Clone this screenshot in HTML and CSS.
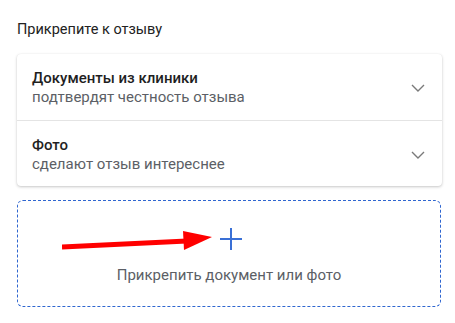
FILE: index.html
```html
<!DOCTYPE html>
<html lang="ru">
<head>
<meta charset="utf-8">
<link rel="stylesheet" href="styles.css">
</head>
<body>
<div class="wrap">
  <div class="heading">Прикрепите к отзыву</div>
  <div class="card">
    <div class="row">
      <div class="texts">
        <div class="row-title">Документы из клиники</div>
        <div class="row-sub">подтвердят честность отзыва</div>
      </div>
      <svg class="chev" width="14" height="8" viewBox="0 0 14 8"><path d="M1 1l6 6 6-6" fill="none" stroke="#7a7a7a" stroke-width="1.4"/></svg>
    </div>
    <div class="row">
      <div class="texts">
        <div class="row-title">Фото</div>
        <div class="row-sub">сделают отзыв интереснее</div>
      </div>
      <svg class="chev" width="14" height="8" viewBox="0 0 14 8"><path d="M1 1l6 6 6-6" fill="none" stroke="#7a7a7a" stroke-width="1.4"/></svg>
    </div>
  </div>
  <div class="drop">
    <svg class="plus" width="22" height="24" viewBox="0 0 22 24"><path d="M11 1v22M0 12h22" stroke="#3a70d6" stroke-width="2"/></svg>
    <div class="drop-text">Прикрепить документ или фото</div>
    <svg class="arrow" width="160" height="26" viewBox="0 0 160 26"><path d="M0 21L125 15" stroke="#ff0000" stroke-width="5"/><path d="M121 5L150 11L122 24Z" fill="#ff0000"/></svg>
  </div>
</div>
</body>
</html>
```
FILE: styles.css
```css
html, body { margin: 0; padding: 0; background: #fff; }
body { font-family: Roboto, "Noto Sans", sans-serif; color: #222; }
.wrap { width: 425px; margin-left: 17px; padding-top: 20px; }
.heading { font-size: 14.5px; line-height: 20px; height: 20px; margin-bottom: 14px; color: #222; }
.card { border-radius: 4px; box-shadow: 0 1px 3px rgba(0,0,0,0.22), 0 0 1px rgba(0,0,0,0.08); background: #fff; }
.row { display: flex; align-items: center; justify-content: space-between; height: 66px; padding: 0 17px 0 15px; box-sizing: border-box; }
.row + .row { border-top: 1px solid #e4e4e4; }
.row-title { font-size: 15px; font-weight: 500; line-height: 20px; color: #1f1f1f; }
.row-sub { font-size: 15px; line-height: 18px; color: #5c5f66; }
.chev { display: block; margin-top: 2px; }
.drop { position: relative; margin-top: 14px; height: 107px; box-sizing: border-box; border: 1px dashed #2f66d0; border-radius: 6px; width: 424px; display: flex; flex-direction: column; align-items: center; padding-top: 26px; }
.plus { display: block; margin-left: 3px; }
.drop-text { margin-top: 14px; font-size: 15px; line-height: 20px; color: #5c5f66; }
.arrow { position: absolute; left: 44px; top: 25px; }
```
